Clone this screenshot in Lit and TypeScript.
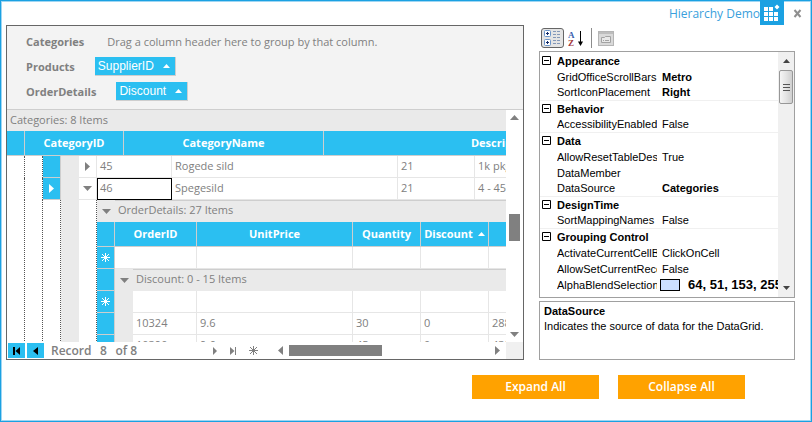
import { LitElement, html, css, svg, nothing } from "lit";
import { customElement } from "lit/decorators.js";
import { classMap } from "lit/directives/class-map.js";

interface Prop {
  group?: boolean;
  name: string;
  value?: string;
  bold?: boolean;
  swatch?: boolean;
}

const PROPS: Prop[] = [
  { group: true, name: "Appearance" },
  { name: "GridOfficeScrollBars", value: "Metro", bold: true },
  { name: "SortIconPlacement", value: "Right", bold: true },
  { group: true, name: "Behavior" },
  { name: "AccessibilityEnabled", value: "False" },
  { group: true, name: "Data" },
  { name: "AllowResetTableDescriptor", value: "True" },
  { name: "DataMember", value: "" },
  { name: "DataSource", value: "Categories", bold: true },
  { group: true, name: "DesignTime" },
  { name: "SortMappingNames", value: "False" },
  { group: true, name: "Grouping Control" },
  { name: "ActivateCurrentCellBehavior", value: "ClickOnCell" },
  { name: "AllowSetCurrentRecord", value: "False" },
  { name: "AlphaBlendSelectionColor", value: "64, 51, 153, 255", bold: true, swatch: true },
  { name: "ApplyVisualStyles", value: "True" },
];

type Dir = "up" | "down" | "left" | "right";
const ARROWS: Record<Dir, string> = {
  up: "M0 5 L4.5 0 L9 5z",
  down: "M0 0 L9 0 L4.5 5z",
  left: "M5 0 L5 9 L0 4.5z",
  right: "M0 0 L5 4.5 L0 9z",
};
const arrow = (dir: Dir) => {
  const tall = dir === "left" || dir === "right";
  const w = tall ? 5 : 9;
  const h = tall ? 9 : 5;
  return html`<svg width=${w} height=${h} viewBox="0 0 ${w} ${h}" aria-hidden="true">
    <path fill="currentColor" d=${ARROWS[dir]} />
  </svg>`;
};
const sortMark = html`<svg width="7" height="4" viewBox="0 0 7 4" aria-hidden="true">
  <path fill="currentColor" d="M0 4 L3.5 0 L7 4z" />
</svg>`;
const star = html`<svg width="9" height="9" viewBox="0 0 9 9" aria-hidden="true">
  <path stroke="currentColor" fill="none" d="M4.5 0V9M0 4.5H9M1 1L8 8M8 1L1 8" />
</svg>`;
const toEnd = (first: boolean) => html`<svg width="7" height="8" viewBox="0 0 7 8" aria-hidden="true">
  ${first
    ? svg`<path fill="currentColor" d="M0 0H2V8H0zM7 0V8L2.5 4z" />`
    : svg`<path fill="currentColor" d="M5 0H6V8H5zM0 0V8L4.5 4z" />`}
</svg>`;
const smallTri = (left: boolean) => html`<svg width="5" height="8" viewBox="0 0 5 8" aria-hidden="true">
  <path fill="currentColor" d=${left ? "M5 0V8L0 4z" : "M0 0V8L4 4z"} />
</svg>`;

@customElement("hierarchy-grid")
export class HierarchyGrid extends LitElement {
  static styles = css`
    :host {
      display: flex;
      flex-direction: column;
      box-sizing: border-box;
      border: 1px solid #666;
      background: #fff;
      color: #808080;
      font: 11px/16px "Open Sans", "Noto Sans", sans-serif;
      overflow: hidden;
    }
    button {
      border: 0;
      padding: 0;
      background: none;
      color: inherit;
      font: inherit;
      display: flex;
      align-items: center;
      justify-content: center;
    }
    svg { display: block; }
    .drop {
      background: #f3f3f3;
      border-bottom: 1px solid #cecece;
      padding: 3px 19px 5px;
    }
    .drop-row {
      display: flex;
      align-items: center;
      height: 25px;
    }
    .drop-row b { font-weight: 700; white-space: nowrap; }
    .hint { margin-left: 23px; white-space: nowrap; }
    .chip {
      box-sizing: border-box;
      height: 19px;
      margin-left: 20px;
      padding: 0 5px 0 3px;
      gap: 9px;
      background: #2bbff1;
      color: #fff;
      font: 12px/16px "Liberation Sans", Arial, sans-serif;
      border: solid #cecece;
      border-width: 0 1px 1px 0;
    }
    .body {
      flex: 1;
      min-height: 0;
      display: grid;
      grid-template-columns: minmax(0, 1fr) 17px;
      grid-template-rows: minmax(0, 1fr) 17px;
    }
    .view { overflow: hidden; background: #fff; }
    .caption {
      height: 21px;
      padding-left: 3px;
      line-height: 19px;
      background: #eaeaea;
    }
    table {
      table-layout: fixed;
      border-collapse: separate;
      border-spacing: 0;
    }
    .master { width: 675px; }
    .full { width: 100%; }
    td, th {
      box-sizing: border-box;
      height: 22px;
      padding: 0;
      overflow: hidden;
      white-space: nowrap;
      text-align: left;
      vertical-align: top;
      font-weight: 400;
    }
    th {
      height: 25px;
      background: #2bbff1;
      color: #fff;
      font-weight: 700;
      text-align: center;
      vertical-align: middle;
      border: solid #cecece;
      border-width: 0 1px 1px 0;
    }
    .sort { display: flex; align-items: center; justify-content: center; gap: 5px; }
    .c18 { width: 18px; }
    .c99 { width: 99px; }
    .c200 { width: 200px; }
    .c75 { width: 75px; }
    .c226 { width: 226px; }
    .c77 { width: 77px; }
    .c64 { width: 64px; }
    .c156 { width: 156px; }
    .c68 { width: 68px; }
    .cell {
      padding-left: 3px;
      line-height: 19px;
      border: solid #e6e6e6;
      border-width: 0 1px 1px 0;
    }
    .current { border: 1px solid #000; padding-left: 2px; line-height: 17px; }
    .rule { border-right: 1px dotted #555; }
    .gray { background: #eaeaea; }
    .head {
      background: #2bbff1;
      color: #fff;
      border: solid #cecece;
      border-width: 0 1px 1px 0;
      vertical-align: middle;
    }
    .group {
      background: #eaeaea;
      border-top: 1px solid #cecece;
      padding-left: 3px;
      line-height: 18px;
    }
    .toggle { vertical-align: middle; }
    .toggle button, .mark { width: 100%; display: flex; justify-content: center; }
    .line { border: solid #e6e6e6; border-width: 0 1px 1px 0; }
    .vbar {
      display: flex;
      flex-direction: column;
      align-items: center;
      padding: 5px 0;
    }
    .track { flex: 1; display: flex; align-items: center; }
    .vbar .track { flex-direction: column; }
    .before { flex-grow: 51; }
    .after { flex-grow: 49; }
    .thumb { background: #808080; }
    .vbar .thumb { width: 11px; height: 27px; }
    .nav { display: flex; align-items: center; min-width: 0; }
    .blue { background: #2bbff1; color: #000; width: 17px; height: 15px; margin-left: 1px; }
    .blue + .blue { margin-left: 2px; }
    .rec {
      box-sizing: border-box;
      display: flex;
      align-items: center;
      width: 162px;
      padding-left: 7px;
      font-size: 12px;
      font-weight: 600;
    }
    .rec input {
      width: 16px;
      margin: 0 4px;
      padding: 0;
      border: 0;
      background: none;
      color: inherit;
      font: inherit;
      text-align: center;
    }
    .steps { box-sizing: border-box; display: flex; gap: 12px; width: 70px; padding-left: 7px; }
    .hbar { flex: 1; display: flex; align-items: center; gap: 6px; padding: 0 6px 0 2px; }
    .hbar .thumb { width: 93px; height: 11px; }
    .corner { background: #f0f0f0; }
  `;

  private blueMark(content: unknown = nothing) {
    return html`<td class="head"><span class="mark">${content}</span></td>`;
  }

  private order(cells: string[], mark: unknown = nothing) {
    return html`<tr>
      ${this.blueMark(mark)}
      <td class="gray"></td>
      ${cells.map((c) => html`<td class="cell">${c}</td>`)}
    </tr>`;
  }

  private orders() {
    return html`<table class="full">
      <colgroup>
        <col class="c18" /><col class="c18" /><col class="c64" /><col class="c156" />
        <col class="c68" /><col class="c68" /><col />
      </colgroup>
      <tbody>
        <tr>
          <td class="gray toggle"><button aria-label="Collapse OrderDetails">${arrow("down")}</button></td>
          <td class="group" colspan="6">OrderDetails: 27 Items</td>
        </tr>
        <tr>
          <th></th>
          <th scope="col" colspan="2">OrderID</th>
          <th scope="col">UnitPrice</th>
          <th scope="col">Quantity</th>
          <th scope="col"><span class="sort">Discount ${sortMark}</span></th>
          <th></th>
        </tr>
        <tr>
          ${this.blueMark(star)}
          <td class="line" colspan="2"></td>
          <td class="line"></td><td class="line"></td><td class="line"></td><td class="line"></td>
        </tr>
        <tr>
          ${this.blueMark()}
          <td class="gray toggle"><button aria-label="Collapse Discount group">${arrow("down")}</button></td>
          <td class="group" colspan="5">Discount: 0 - 15 Items</td>
        </tr>
        ${this.order(["", "", "", "", ""], star)}
        ${this.order(["10324", "9.6", "30", "0", "28856"])}
        ${this.order(["10390", "9.6", "45", "0", "43856"])}
      </tbody>
    </table>`;
  }

  private product(open: boolean, cells: string[]) {
    return html`<tr>
      <td class="rule"></td>
      <td class="rule"></td>
      ${this.blueMark(open ? arrow("right") : nothing)}
      <td class="gray"></td>
      <td class="toggle line">
        <button aria-label=${open ? "Collapse record" : "Expand record"}>${arrow(open ? "down" : "right")}</button>
      </td>
      ${cells.map(
        (c, i) => html`<td class=${classMap({ cell: true, current: open && i === 0 })}>${c}</td>`,
      )}
    </tr>`;
  }

  render() {
    return html`
      <div class="drop">
        <div class="drop-row"><b>Categories</b><span class="hint">Drag a column header here to group by that column.</span></div>
        <div class="drop-row"><b>Products</b><button class="chip">SupplierID ${sortMark}</button></div>
        <div class="drop-row"><b>OrderDetails</b><button class="chip">Discount ${sortMark}</button></div>
      </div>
      <div class="body">
        <div class="view">
          <div class="caption">Categories: 8 Items</div>
          <table class="master">
            <colgroup><col class="c18" /><col class="c99" /><col class="c200" /><col /></colgroup>
            <thead>
              <tr>
                <th></th>
                <th scope="col">CategoryID</th>
                <th scope="col">CategoryName</th>
                <th scope="col">Description</th>
              </tr>
            </thead>
            <tbody>
              <tr>
                <td colspan="4">
                  <table class="full">
                    <colgroup>
                      <col class="c18" /><col class="c18" /><col class="c18" /><col class="c18" /><col class="c18" />
                      <col class="c75" /><col class="c226" /><col class="c77" /><col />
                    </colgroup>
                    <tbody>
                      ${this.product(false, ["45", "Rogede sild", "21", "1k pkg."])}
                      ${this.product(true, ["46", "Spegesild", "21", "4 - 450 g glasses"])}
                      <tr>
                        <td class="rule"></td>
                        <td class="rule"></td>
                        <td class="rule"></td>
                        <td class="gray"></td>
                        <td class="rule"></td>
                        <td colspan="4">${this.orders()}</td>
                      </tr>
                    </tbody>
                  </table>
                </td>
              </tr>
            </tbody>
          </table>
        </div>
        <div class="vbar">
          <button aria-label="Scroll up">${arrow("up")}</button>
          <div class="track">
            <span class="before"></span><span class="thumb"></span><span class="after"></span>
          </div>
          <button aria-label="Scroll down">${arrow("down")}</button>
        </div>
        <div class="nav">
          <button class="blue" aria-label="First record">${toEnd(true)}</button>
          <button class="blue" aria-label="Previous record">${smallTri(true)}</button>
          <label class="rec">Record <input value="8" /> of 8</label>
          <div class="steps">
            <button aria-label="Next record">${smallTri(false)}</button>
            <button aria-label="Last record">${toEnd(false)}</button>
            <button aria-label="New record">${star}</button>
          </div>
          <div class="hbar">
            <button aria-label="Scroll left">${arrow("left")}</button>
            <div class="track"><span class="thumb"></span></div>
            <button aria-label="Scroll right">${arrow("right")}</button>
          </div>
        </div>
        <div class="corner"></div>
      </div>
    `;
  }
}

@customElement("property-panel")
export class PropertyPanel extends LitElement {
  static styles = css`
    :host {
      display: flex;
      flex-direction: column;
      box-sizing: border-box;
      min-height: 0;
      color: #000;
      font: 11px/16px "Liberation Sans", Arial, sans-serif;
    }
    button { border: 0; padding: 0; background: none; color: inherit; font: inherit; display: flex; }
    svg { display: block; }
    .tools { display: flex; align-items: center; height: 26px; padding-left: 2px; }
    .tool { margin-right: 4px; }
    .letter { font: bold 9px "Liberation Serif", serif; }
    .sep { width: 1px; height: 20px; margin: 0 6px 0 3px; background: #8c8c8c; }
    .grid {
      flex: 1;
      min-height: 0;
      display: flex;
      border: 1px solid #a0a0a0;
      overflow: hidden;
    }
    .list { flex: 1; min-width: 0; overflow: hidden; padding-top: 1px; }
    table { width: 100%; table-layout: fixed; border-collapse: separate; border-spacing: 0; }
    .g { width: 17px; }
    .n { width: 100px; }
    td, th {
      box-sizing: border-box;
      height: 16px;
      padding: 0;
      line-height: 16px;
      overflow: hidden;
      white-space: nowrap;
      text-align: left;
      font-weight: 400;
      vertical-align: top;
    }
    .cat { font-weight: 700; }
    .leaf { border-bottom: 1px solid #f0f0f0; height: 16px; line-height: 15px; }
    .val { padding-left: 5px; }
    .bold { font-weight: 700; }
    .swatched { display: flex; align-items: center; gap: 8px; margin-left: -2px; height: 16px; font-size: 13px; }
    .swatch { width: 18px; height: 10px; border: 1px solid #000; background: #cce0ff; flex: none; }
    .fold { padding: 3px 0 0 2px; }
    .bar {
      width: 16px;
      background: #f0f0f0;
      display: flex;
      flex-direction: column;
      align-items: center;
      justify-content: space-between;
    }
    .top { display: flex; flex-direction: column; align-items: center; gap: 7px; padding-top: 7px; }
    .bottom { padding-bottom: 7px; }
    .thumb {
      box-sizing: border-box;
      width: 14px;
      height: 34px;
      border: 1px solid #979797;
      border-radius: 2px;
      background: linear-gradient(90deg, #f5f5f5, #e4e4e4 50%, #cfcfcf);
      display: flex;
      align-items: center;
      justify-content: center;
    }
    .help {
      box-sizing: border-box;
      height: 59px;
      margin-top: 3px;
      padding: 2px 4px;
      border: 1px solid #a0a0a0;
      line-height: 15px;
    }
    .help b { display: block; }
  `;

  render() {
    const minus = html`<svg width="9" height="9" viewBox="0 0 9 9" aria-hidden="true">
      <path fill="none" stroke="#000" d="M.5 .5H8.5V8.5H.5zM2 4.5H7" />
    </svg>`;
    return html`
      <div class="tools">
        <button class="tool" aria-label="Categorized">
          <svg width="23" height="20" viewBox="0 0 23 20">
            <rect x=".5" y=".5" width="22" height="19" rx="2.5" fill="#e4e4e4" stroke="#666" />
            <g fill="#fff" stroke="#6b94c8">
              <rect x="3.5" y="2.5" width="6" height="6" rx="1" />
              <rect x="3.5" y="11.5" width="6" height="6" rx="1" />
            </g>
            <path stroke="#102a6b" fill="none" d="M5 5.500H8M6.500 4V7M5 14.500H8M6.500 13V16" />
            <path stroke="#8498b8" fill="none" stroke-dasharray="3 1" d="M12 3.500H19M12 6.500H19M12 9.500H19M12 12.500H19M12 15.500H19" />
          </svg>
        </button>
        <button class="tool" aria-label="Alphabetical">
          <svg width="16" height="17" viewBox="0 0 16 17">
            <text class="letter" x="0" y="8" fill="#3a5fae">A</text>
            <text class="letter" x="0" y="16" fill="#a3383a">Z</text>
            <path stroke="#000" d="M12.500 1V14" />
            <path d="M10 11.500H15L12.500 16z" />
          </svg>
        </button>
        <span class="sep"></span>
        <button aria-label="Property pages" disabled>
          <svg width="16" height="15" viewBox="0 0 16 15">
            <rect x=".5" y=".5" width="15" height="14" fill="#d9d9d9" stroke="#b5b5b5" />
            <path fill="#bdbdbd" d="M1 1H15V3H1z" />
            <path fill="#e8e8e8" stroke="#a2a2a2" d="M3.500 6.500H6.500L7.500 5.500H12.500V11.500H3.500z" />
            <path stroke="#a2a2a2" d="M5 9.500H6M7 9.500H11" />
          </svg>
        </button>
      </div>
      <div class="grid">
        <div class="list">
          <table>
            <colgroup><col class="g" /><col class="n" /><col /></colgroup>
            <tbody>
              ${PROPS.map((p, i) => {
                const leaf = !p.group && !!PROPS[i + 1]?.group;
                return p.group
                  ? html`<tr>
                      <td><button class="fold" aria-label="Collapse ${p.name}">${minus}</button></td>
                      <th class="cat" colspan="2">${p.name}</th>
                    </tr>`
                  : html`<tr>
                      <td class=${classMap({ leaf })}></td>
                      <th class=${classMap({ leaf })}>${p.name}</th>
                      <td class=${classMap({ leaf, val: true, bold: !!p.bold })}>
                        ${p.swatch
                          ? html`<span class="swatched"><span class="swatch"></span>${p.value}</span>`
                          : p.value}
                      </td>
                    </tr>`;
              })}
            </tbody>
          </table>
        </div>
        <div class="bar">
          <div class="top">
            <button aria-label="Scroll up">
              <svg width="7" height="4" viewBox="0 0 7 4"><path fill="#444" d="M0 4L3.500 0L7 4z" /></svg>
            </button>
            <span class="thumb">
              <svg width="7" height="9" viewBox="0 0 7 9"><path stroke="#555" d="M0 1.500H7M0 4.500H7M0 7.500H7" /></svg>
            </span>
          </div>
          <button class="bottom" aria-label="Scroll down">
            <svg width="7" height="4" viewBox="0 0 7 4"><path fill="#444" d="M0 0H7L3.500 4z" /></svg>
          </button>
        </div>
      </div>
      <div class="help"><b>DataSource</b>Indicates the source of data for the DataGrid.</div>
    `;
  }
}

@customElement("app-root")
export class AppRoot extends LitElement {
  static styles = css`
    :host {
      display: flex;
      flex-direction: column;
      box-sizing: border-box;
      height: 100vh;
      border: 1px solid #1ba1e2;
      box-shadow: inset 0 0 0 1px #9fd6f3;
      background: #fff;
      font: 12px/16px "Open Sans", "Noto Sans", sans-serif;
    }
    header {
      display: flex;
      align-items: center;
      justify-content: flex-end;
      height: 24px;
      padding-right: 9px;
      color: #3a9fdc;
    }
    h1 { margin: 0; padding-top: 2px; font-size: 12px; font-weight: 400; }
    svg { display: block; }
    .logo { margin-right: 9px; }
    button { border: 0; padding: 0; font: inherit; }
    .close { background: none; }
    main {
      flex: 1;
      min-height: 0;
      display: flex;
      gap: 15px;
      padding: 0 16px 0 5px;
    }
    hierarchy-grid { flex: 1; min-width: 0; }
    property-panel { width: 256px; flex: none; }
    footer {
      display: flex;
      justify-content: flex-end;
      gap: 19px;
      padding: 15px 66px 22px;
    }
    .action { width: 127px; height: 24px; background: #ffa200; color: #fff; font-weight: 600; }
  `;

  render() {
    return html`
      <header>
        <h1>Hierarchy Demo</h1>
        <svg class="logo" width="24" height="24" viewBox="0 0 24 24" aria-hidden="true">
          <rect width="24" height="24" fill="#1ba1e2" />
          <path
            fill="#fff"
            d="M4 6h4v4h-4zM9 6h4v4h-4zM4 11h4v4h-4zM9 11h4v4h-4zM14 11h4v4h-4zM4 16h4v4h-4zM9 16h4v4h-4zM14 16h4v4h-4zM17 3.500l2.500 2.500l-2.500 2.500l-2.500-2.500z"
          />
        </svg>
        <button class="close" aria-label="Close">
          <svg width="9" height="9" viewBox="0 0 9 9"><path stroke="#8f8f8f" stroke-width="2" d="M1.500 1L7.500 8M7.500 1L1.500 8" /></svg>
        </button>
      </header>
      <main>
        <hierarchy-grid></hierarchy-grid>
        <property-panel></property-panel>
      </main>
      <footer>
        <button class="action">Expand All</button>
        <button class="action">Collapse All</button>
      </footer>
    `;
  }
}
